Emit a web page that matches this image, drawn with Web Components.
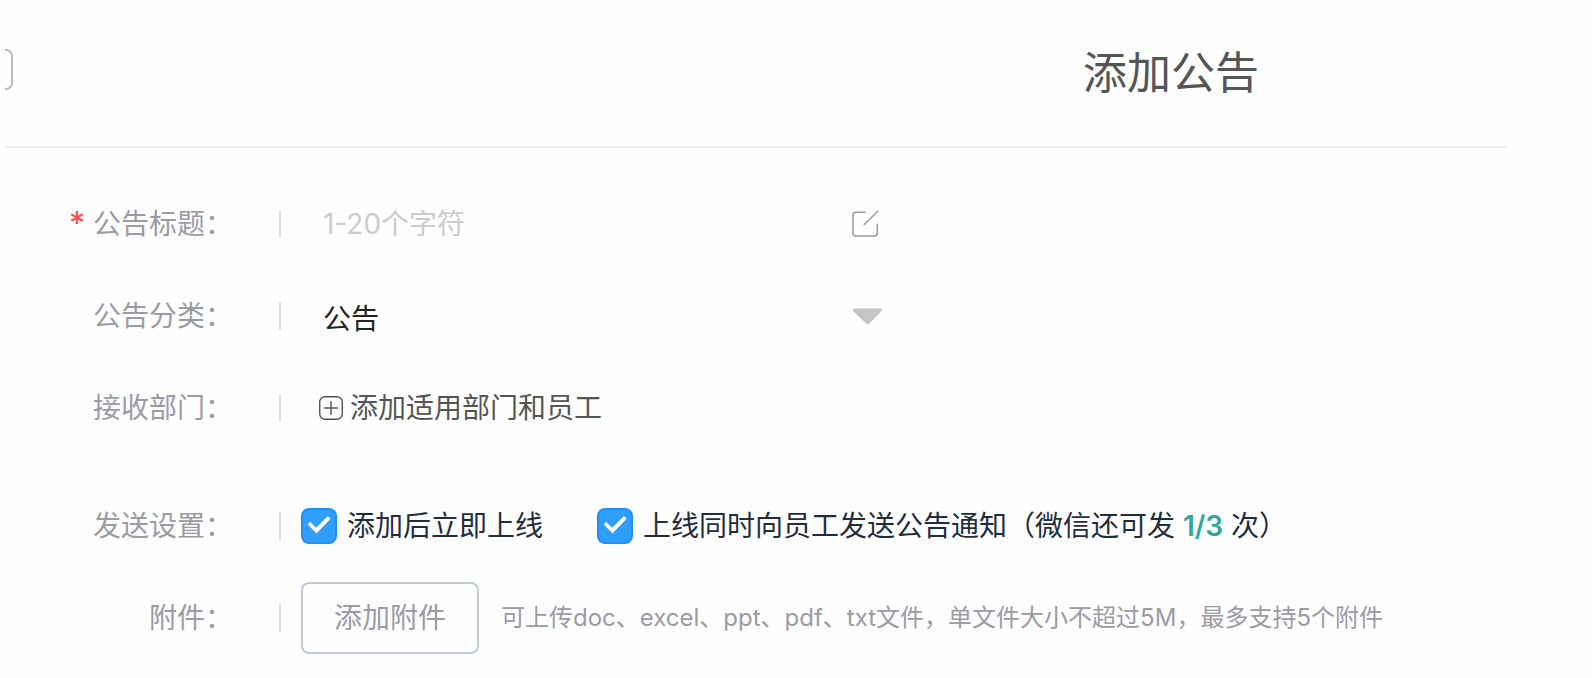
<!DOCTYPE html>
<html lang="zh-CN">
<head>
<meta charset="utf-8">
<meta name="viewport" content="width=device-width, initial-scale=1">
<title>添加公告</title>
<style>
  body {
    margin: 0;
    background: #fefefe;
    font-family: Inter, "Noto Sans CJK SC", sans-serif;
    font-size: 28px;
    line-height: 40px;
    color: #1f2d3d;
    --muted: #9b9ba5;
    --divider: #dedede;
  }
</style>
</head>
<body>
<notice-page></notice-page>
<script>
  class BaseElement extends HTMLElement {
    constructor() {
      super();
      this.attachShadow({ mode: "open" }).innerHTML = this.constructor.markup;
    }
  }

  class PageHeader extends BaseElement {
    static markup = `
      <style>
        :host { display: block; border-bottom: 2px solid #ededed; }
        header { display: flex; align-items: center; justify-content: space-between; height: 146px; padding-right: 242px; box-sizing: border-box; }
        .back { width: 8px; height: 41px; box-sizing: border-box; padding: 0; border: 2px solid #bbb; border-left: 0; border-radius: 0 7px 7px 0; background: none; margin-bottom: 8px; }
        header { padding-right: 248px; }
        h1 { margin: 0; font-size: 44px; line-height: 64px; font-weight: 400; color: #555; }
      </style>
      <header><button class="back" type="button" aria-label="返回"></button><h1><slot></slot></h1></header>`;
  }
  customElements.define("page-header", PageHeader);

  class FormRow extends BaseElement {
    static markup = `
      <style>
        :host { display: grid; grid-template-columns: 228px 48px 1fr; align-items: center; min-height: 92px; }
        .label { display: flex; justify-content: flex-end; gap: 8px; color: var(--muted); white-space: nowrap; }
        .star { display: none; color: #ff4949; font-size: 32px; }
        :host([required]) .star { display: inline; }
        .line { justify-self: end; width: 2px; height: 28px; background: var(--divider); }
        .content { display: flex; align-items: center; min-width: 0; padding-left: 20px; }
        :host([inset]) .content { padding-left: 42px; }
        :host([spaced]) { margin-top: 26px; }
      </style>
      <div class="label"><span class="star" aria-hidden="true">*</span><slot name="label"></slot></div>
      <span class="line"></span>
      <div class="content"><slot></slot></div>`;
  }
  customElements.define("form-row", FormRow);

  class FieldIcon extends BaseElement {
    static markup = `
      <style>
        :host { display: inline-flex; width: 32px; height: 32px; flex: none; }
        svg { display: none; width: 32px; height: 32px; fill: none; }
        :host([name=edit]) .edit, :host([name=caret]) .caret, :host([name=plus]) .plus { display: block; }
      </style>
      <svg class="edit" viewBox="0 0 32 32" stroke="#9b9ba5" stroke-width="1.6" stroke-linecap="round"><path d="M14 4.300H5q-3 0-3 3V25q0 3 3 3H23.300q3 0 3-3V16.500M13.300 16.500L27 3"/></svg>
      <svg class="caret" viewBox="0 0 32 32"><path d="M4 8.500H29q3.300.500 1.200 3L19 23q-2 2.500-4.500 0L2.500 11.500Q.5 9 4 8.500Z" fill="#c5c5c5"/></svg>
      <svg class="plus" viewBox="0 0 32 32" stroke="#555" stroke-width="1.400"><rect x="1.700" y="4.700" width="22.600" height="22.600" rx="5.500"/><path d="M13 9v14M6 16h14"/></svg>`;
  }
  customElements.define("field-icon", FieldIcon);

  class NoticeForm extends BaseElement {
    static markup = `
      <style>
        :host { display: block; padding-top: 30px; }
        input, select, button { font: inherit; color: inherit; margin: 0; padding: 0; border: 0; background: none; outline: none; }
        .field { display: flex; align-items: center; gap: 8px; flex: 0 1 560px; min-width: 0; }
        .field input, .field select { flex: 1; min-width: 0; height: 48px; appearance: none; }
        .field select { color: #222; padding-top: 6px; }
        input::placeholder { color: #ccc; opacity: 1; }
        .picker { display: flex; align-items: center; color: #555; margin-left: -5px; }
        .check { display: flex; align-items: center; gap: 10px; white-space: nowrap; }
        .check + .check { margin-left: 54px; }
        .check input { appearance: none; width: 36px; height: 36px; box-sizing: border-box; flex: none; border: 2px solid #bfcbd9; border-radius: 8px; display: grid; }
        .check input:checked { background: #2e9fff; border-color: #1f8fff; }
        .check input:checked::before { content: ""; width: 36px; height: 36px; margin: -2px; background: #fff;
          clip-path: polygon(19% 46%, 25% 38%, 42% 55%, 75% 22%, 82% 30%, 43% 71%); }
        b { color: #30a79b; font-weight: 600; }
        .upload { flex: none; border: 2px solid #bfcbd9; border-radius: 8px; width: 178px; height: 72px; color: var(--muted); }
        .hint { font-size: 24px; color: var(--muted); margin-left: 22px; white-space: nowrap; }
      </style>
      <form>
        <form-row required inset>
          <label slot="label" for="title">公告标题：</label>
          <div class="field"><input id="title" type="text" maxlength="20" required placeholder="1-20个字符"><field-icon name="edit"></field-icon></div>
        </form-row>
        <form-row inset>
          <label slot="label" for="category">公告分类：</label>
          <div class="field"><select id="category"><option>公告</option></select><field-icon name="caret"></field-icon></div>
        </form-row>
        <form-row inset>
          <label slot="label" for="scope">接收部门：</label>
          <button class="picker" id="scope" type="button"><field-icon name="plus"></field-icon>添加适用部门和员工</button>
        </form-row>
        <form-row spaced>
          <span slot="label">发送设置：</span>
          <label class="check"><input type="checkbox" checked><span>添加后立即上线</span></label>
          <label class="check"><input type="checkbox" checked><span>上线同时向员工发送公告通知（微信还可发 <b>1/3</b> 次）</span></label>
        </form-row>
        <form-row>
          <label slot="label" for="attach">附件：</label>
          <button class="upload" id="attach" type="button">添加附件</button>
          <span class="hint">可上传doc、excel、ppt、pdf、txt文件，单文件大小不超过5M，最多支持5个附件</span>
        </form-row>
      </form>`;
  }
  customElements.define("notice-form", NoticeForm);

  class NoticePage extends BaseElement {
    static markup = `
      <style>:host { display: block; margin: 0 85px 0 5px; }</style>
      <page-header>添加公告</page-header>
      <notice-form></notice-form>`;
  }
  customElements.define("notice-page", NoticePage);
</script>
</body>
</html>
